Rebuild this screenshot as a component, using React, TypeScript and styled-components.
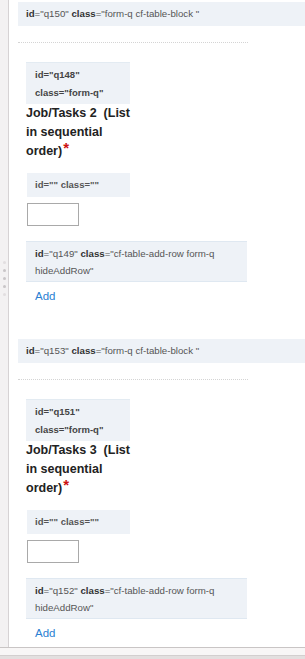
import React from 'react';
import styled, { createGlobalStyle } from 'styled-components';

const GlobalStyle = createGlobalStyle`
  html, body {
    margin: 0;
    padding: 0;
    background: #ffffff;
    font-family: "Liberation Sans", Arial, sans-serif;
  }
`;

const Frame = styled.div`
  width: 305px;
  height: 659px;
  display: flex;
  flex-direction: column;
  overflow: hidden;
  background: #e3dfdf;
`;

const Window = styled.div`
  height: 648px;
  display: flex;
  flex-direction: row;
  background: #ffffff;
  border-bottom: 1px solid #c9c5c5;
  box-sizing: border-box;
`;

const Rail = styled.div`
  width: 8px;
  flex-shrink: 0;
  background: #f3f1f2;
  border-right: 1px solid #d6d2d4;
  display: flex;
  flex-direction: column;
  align-items: center;
  gap: 5px;
  padding-top: 261px;
`;

const Grip = styled.span<{ $faint?: boolean }>`
  width: 3px;
  height: 3px;
  border-radius: 50%;
  background: ${(p) => (p.$faint ? '#e2dee0' : '#c9c5c7')};
`;

const Content = styled.div`
  flex: 1;
  padding-left: 9px;
  overflow: hidden;
`;

const Footer = styled.div`
  height: 7px;
  background: #f8f6f6;
  border-bottom: 1px solid #d3cfcf;
`;

const Block = styled.div`
  padding-top: 2px;
  padding-bottom: 34px;
`;

const BlockHeader = styled.div`
  height: 24px;
  line-height: 24px;
  background: #eef2f7;
  padding-left: 8px;
  font-size: 9.7px;
  color: #555;
  white-space: nowrap;
`;

const Key = styled.b`
  color: #333;
`;

const Divider = styled.div`
  margin-top: 16px;
  width: 230px;
  border-top: 1px dotted #d4d4d4;
`;

const Inner = styled.div`
  padding-left: 8px;
`;

const QBox = styled.div`
  margin-top: 19px;
  width: 104px;
  box-sizing: border-box;
  background: #eef2f7;
  border-top: 1px solid #e3ebf2;
  padding: 3px 9px 2px;
  font-size: 9.5px;
  font-weight: bold;
  line-height: 18px;
  color: #444;
`;

const Label = styled.div`
  width: 108px;
  font-size: 12.5px;
  font-weight: bold;
  line-height: 19px;
  color: #222;
`;

const Star = styled.span`
  color: #cc1111;
  font-size: 15px;
  line-height: 0;
  vertical-align: 2px;
  margin-left: 1px;
`;

const IdBox = styled.div`
  margin-top: 12px;
  margin-left: 1px;
  width: 103px;
  height: 24px;
  line-height: 24px;
  box-sizing: border-box;
  background: #eef2f7;
  padding-left: 8px;
  font-size: 9.5px;
  font-weight: bold;
  color: #555;
`;

const TextInput = styled.input`
  display: block;
  margin: 6px 0 0 1px;
  width: 52px;
  height: 23px;
  box-sizing: border-box;
  border: 1px solid #a9a9a9;
  background: #fff;
  padding: 0;
`;

const AddRowBox = styled.div`
  margin-top: 15px;
  width: 221px;
  box-sizing: border-box;
  background: #eef2f7;
  border-top: 1px solid #dfe8f1;
  border-bottom: 1px solid #dfe8f1;
  padding: 3px 9px 2px;
  font-size: 9.7px;
  line-height: 17px;
  color: #555;
`;

const AddLink = styled.a`
  display: block;
  margin: 8px 0 0 9px;
  font-size: 11.5px;
  line-height: 13px;
  color: #2b7fd2;
  text-decoration: none;
  cursor: pointer;
`;

type TableBlockProps = {
  blockId: string;
  qId: string;
  rowId: string;
  num: number;
};

const TableBlock = ({ blockId, qId, rowId, num }: TableBlockProps) => (
  <Block>
    <BlockHeader>
      <Key>id</Key>="{blockId}" <Key>class</Key>="form-q cf-table-block "
    </BlockHeader>
    <Divider />
    <Inner>
      <QBox>
        id="{qId}"
        <br />
        class="form-q"
      </QBox>
      <Label>
        Job/Tasks {num}&nbsp; (List in sequential order)<Star>*</Star>
      </Label>
      <IdBox>id="" class=""</IdBox>
      <TextInput type="text" />
      <AddRowBox>
        <Key>id</Key>="{rowId}" <Key>class</Key>="cf-table-add-row form-q hideAddRow"
      </AddRowBox>
      <AddLink>Add</AddLink>
    </Inner>
  </Block>
);

export default function App() {
  return (
    <>
      <GlobalStyle />
      <Frame>
        <Window>
          <Rail>
            <Grip $faint />
            <Grip />
            <Grip />
            <Grip />
            <Grip $faint />
          </Rail>
          <Content>
            <TableBlock blockId="q150" qId="q148" rowId="q149" num={2} />
            <TableBlock blockId="q153" qId="q151" rowId="q152" num={3} />
          </Content>
        </Window>
        <Footer />
      </Frame>
    </>
  );
}
